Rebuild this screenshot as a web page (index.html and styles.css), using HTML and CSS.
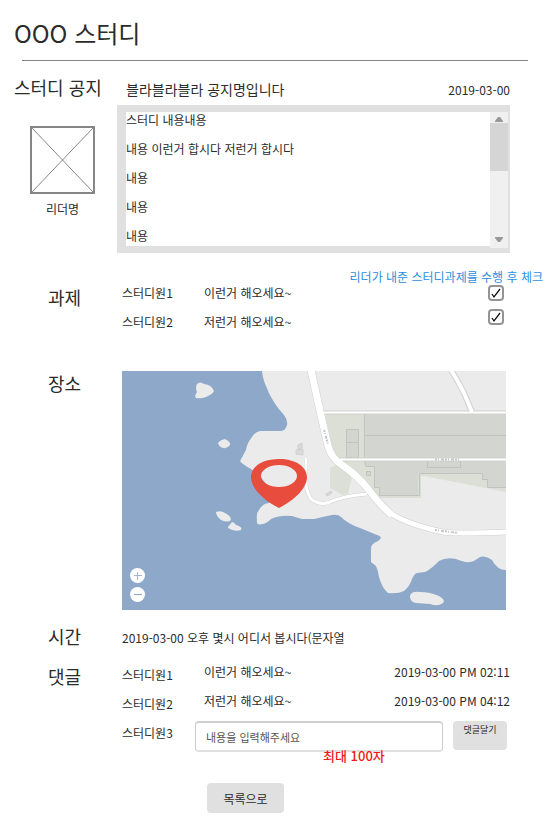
FILE: index.html
```html
<!DOCTYPE html>
<html lang="ko">
<head>
<meta charset="utf-8">
<meta name="viewport" content="width=device-width, initial-scale=1">
<title>OOO 스터디</title>
<link rel="stylesheet" href="styles.css">
</head>
<body>
<header class="page-header"><h1>OOO 스터디</h1></header>
<main>
  <section class="row row-notice">
    <div class="side">
      <h2>스터디 공지</h2>
      <figure class="leader">
        <svg class="avatar" viewBox="0 0 65 68" role="img" aria-label="리더 사진">
          <path d="M2 2 63 66M63 2 2 66" fill="none" stroke="#868686" stroke-width="1"/>
          <rect x="1" y="1" width="63" height="66" fill="none" stroke="#868686" stroke-width="2"/>
        </svg>
        <figcaption>리더명</figcaption>
      </figure>
    </div>
    <div class="notice">
      <div class="notice-head"><h3>블라블라블라 공지명입니다</h3><time>2019-03-00</time></div>
      <div class="notice-frame">
        <div class="notice-text">
          <p>스터디 내용내용</p>
          <p>내용 이런거 합시다 저런거 합시다</p>
          <p>내용</p>
          <p>내용</p>
          <p>내용</p>
        </div>
        <div class="scrollbar" aria-hidden="true">
          <svg class="arrow" viewBox="0 0 18 11"><path d="M5 10V9L8 5H10L13 9V10Z" fill="#999"/></svg>
          <div class="thumb"></div>
          <svg class="arrow arrow-down" viewBox="0 0 18 11"><path d="M5 0V1L8 5H10L13 1V0Z" fill="#999"/></svg>
        </div>
      </div>
    </div>
  </section>

  <section class="row row-tasks">
    <h2>과제</h2>
    <div class="tasks">
      <p class="hint">리더가 내준 스터디과제를 수행 후 체크</p>
      <ul class="task-list">
        <li><label class="name" for="t1">스터디원1</label><span>이런거 해오세요~</span></li>
        <li><label class="name" for="t2">스터디원2</label><span>저런거 해오세요~</span></li>
      </ul>
      <div class="checks">
        <input type="checkbox" id="t1" checked>
        <input type="checkbox" id="t2" checked>
      </div>
    </div>
  </section>

  <section class="row row-place">
    <h2>장소</h2>
    <div class="map">
      <svg viewBox="0 0 384 239" role="img" aria-label="지도">
        <rect width="384" height="239" fill="#8da8c9"/>
        <g fill="#ebebeb">
          <path d="M140 0 Q141 9 144 15 Q148 26 156 37 L162 44 Q168 52 163 58 Q162 60 156 60 L138 60 Q133 61 130 66 Q125 72 124 79 L118 90 Q120 93 129 98 L138 105 L144 113 L153 128 L147 132 Q141 132 137 139 Q134 142 135 149 Q134 155 140 153 Q144 153 149 148 Q158 144 170 145 L180 148 H192 Q200 146 210 144 Q216 143 219 146 Q226 153 238 157 L255 164 Q262 166 256 170 Q249 173 249 177 L249 191 L254 195 Q256 199 257 206 Q260 217 266 222 Q276 223 282 220 Q288 215 290 208 Q292 203 295 202 L303 201 Q308 199 317 190 Q324 186 334 188 Q345 193 352 190 L358 186 Q364 184 370 189 Q375 199 384 199 V0Z"/>
          <path d="M75 13Q78 10 82 13 Q90 14 92 20 Q91 23 84 26 Q79 28 74 27 Q72 25 75 21 Q73 17 75 13Z"/>
          <path d="M96 72Q98 69 103 68 Q109 71 108 74 Q105 78 101 77 Q97 76 96 72Z"/>
          <path d="M94 141Q99 139 103 142 Q109 145 109 149 Q106 152 99 149 Q94 145 94 141Z"/>
          <path d="M106 156L110 151Q112 151 114 154Q121 156 119 159Q112 161 106 157Z"/>
          <path d="M288 225Q289 220 298 221 Q308 221 317 225 Q324 229 321 232 Q316 236 308 233 L294 232 Q288 231 288 225Z"/>
        </g>
        <path d="M203 43H243V90L299 96H384V121L302 105H299V127H257L243 114L225 97L213 87Z M208 97L218 92L230 108Q227 117 226 123L221 124L208 117Z" fill="#dcdfd5"/>
        <path d="M242 43H384V116H365V108H360V102H296V124H258V116H253V96H244L242 90Z" fill="#d3d6d0"/>
        <g fill="none" stroke="#c1c4be" stroke-width="1">
          <path d="M242.500 43V90L244 95.500H252.500V116.500H257.500V124.500H297.500V102.500H360.500V108.500H365.500V116.500H384M242 64.500H384M305.500 89V96.500H338.500V89"/>
          <path d="M224.500 58.500H236.500V86.500H224.500ZM224 71.500H236M244.500 100.500H248.500V104.500H244.500Z" fill="#d3d6d0"/>
        </g>
        <g fill="none" stroke="#d0d0ce">
          <path d="M189 -1 198 40 206 75Q210 88 220 94Q235 104 246 118Q258 134 270 144" stroke-width="8"/>
          <path d="M265 140Q283 153 321 161Q333 163 385 161" stroke-width="6"/>
          <path d="M202 41.500H385M218 88.500H385M184 87V111Q184 120 189 128Q198 135 208 131Q221 125 245 123" stroke-width="4"/>
          <path d="M329 -1Q336 10 342 22L350 41" stroke-width="6"/>
        </g>
        <g fill="none" stroke="#fff">
          <path d="M189 -1 198 40 206 75Q210 88 220 94Q235 104 246 118Q258 134 270 144" stroke-width="7"/>
          <path d="M265 140Q283 153 321 161Q333 163 385 161" stroke-width="5"/>
          <path d="M202 41.500H385M218 88.500H385" stroke-width="2"/>
          <path d="M184 87V111Q184 120 189 128Q198 135 208 131Q221 125 245 123" stroke-width="3"/>
          <path d="M329 -1Q336 10 342 22L350 41" stroke-width="4"/>
        </g>
        <path d="M202 59 206 73M313 88.500H338M313 159 336 162" fill="none" stroke="#c6c6c6" stroke-width="2" stroke-dasharray="2 1 1 2 3 1"/>
        <path d="M174 79 181 78V84L174 83ZM176 74 180 72V77L176 78ZM204 123 209 120 210 122 205 125Z" fill="#dadada" stroke="#cfcfcf"/>
        <path d="M157 88C174 88 185 96 185 106C185 117 173 129 157 137C141 129 129 117 129 106C129 96 140 88 157 88ZM157 94A18 11 0 1 0 157 116A18 11 0 1 0 157 94Z" fill="#e84c3d" fill-rule="evenodd"/>
      </svg>
      <div class="zoom">
        <button type="button" aria-label="확대"><svg viewBox="0 0 15 15"><path d="M4 7.500H12M7.500 4V12" stroke="#a5b5d2"/></svg></button>
        <button type="button" aria-label="축소"><svg viewBox="0 0 15 15"><path d="M4 7.500H12" stroke="#8da8c9"/></svg></button>
      </div>
    </div>
  </section>

  <section class="row row-time">
    <h2>시간</h2>
    <p>2019-03-00 오후 몇시 어디서 봅시다(문자열</p>
  </section>

  <section class="row row-comments">
    <h2>댓글</h2>
    <div class="comments">
      <div class="comment"><span class="name">스터디원1</span><p>이런거 해오세요~</p><time>2019-03-00 PM 02:11</time></div>
      <div class="comment"><span class="name">스터디원2</span><p>저런거 해오세요~</p><time>2019-03-00 PM 04:12</time></div>
      <form class="comment">
        <label class="name" for="reply">스터디원3</label>
        <div class="field">
          <input type="text" id="reply" placeholder="내용을 입력해주세요">
          <span class="limit">최대 100자</span>
        </div>
        <button type="button" class="btn btn-reply">댓글달기</button>
      </form>
    </div>
  </section>
  <button type="button" class="btn btn-list">목록으로</button>
</main>
</body>
</html>
```
FILE: styles.css
```css
* { box-sizing: border-box; }

body, h1, h2, h3, p, ul, figure { margin: 0; padding: 0; }

body {
  background: #fff;
  color: #2b2b2b;
  font: 12px/29px "Noto Sans CJK KR", sans-serif;
}

button, input { font-family: inherit; color: inherit; }
ul { list-style: none; }
svg { display: block; }

.page-header {
  margin: 0 22px;
  padding-top: 15px;
  height: 61px;
  border-bottom: 1px solid #868686;
}

h1 { margin-left: -8px; font-size: 24px; line-height: 36px; font-weight: 400; }
h2 { font-size: 18px; line-height: 28px; font-weight: 400; }
h3 { font-size: 14px; font-weight: 400; }

main { padding-right: 40px; }

.row { display: grid; grid-template-columns: 74px minmax(0, 1fr); padding-left: 48px; }

/* Notice */
.row-notice { grid-template-columns: 103px minmax(0, 1fr); padding: 12px 0 0 14px; }
.leader { width: 65px; margin: 25px 0 0 16px; text-align: center; }
.avatar { width: 65px; height: 68px; }
.notice-head { display: flex; justify-content: space-between; padding: 0 0 1px 9px; margin-top: 2px; }
.notice-frame {
  display: flex;
  padding: 7px 2px 5px 9px;
  height: 148px;
  background: #e0e0e0;
}
.notice-text { flex: 1; margin-bottom: 2px; overflow: hidden; background: #fff; }
.notice-text p:first-child { margin-top: -7px; }
.scrollbar { display: flex; flex-direction: column; width: 18px; background: #f0f0f0; }
.arrow { width: 18px; height: 11px; }
.thumb { height: 48px; background: #d5d5d5; }
.arrow-down { margin-top: auto; }

/* Tasks */
.row-tasks { padding-top: 25px; }
.row-tasks h2 { padding-top: 5px; }
.tasks { position: relative; display: flex; justify-content: space-between; }
.hint {
  position: absolute;
  top: -9px;
  right: -33px;
  line-height: 16px;
  color: #2d8fdc;
  white-space: nowrap;
}
.task-list li { display: flex; }
.name { flex: none; width: 82px; }
.checks { display: flex; flex-direction: column; gap: 8px; padding: 7px 6px 0 0; }
.checks input {
  appearance: none;
  width: 16px;
  height: 16px;
  margin: 0;
  border: 2px solid #949494;
  border-radius: 4px;
  background: #fff;
}
.checks input:checked {
  background: #fff url("data:image/svg+xml,%3Csvg xmlns='http://www.w3.org/2000/svg' viewBox='0 0 12 12'%3E%3Cpath d='M2 7L4 10L10 2' fill='none' stroke='%23111' stroke-width='1.300'/%3E%3C/svg%3E") center / 12px 12px no-repeat;
}

/* Place */
.row-place { padding-top: 34px; }
.row-place h2 { margin-top: -1px; }
.map { position: relative; margin: 1px 4px 0 0; }
.map > svg { width: 100%; }
.zoom { position: absolute; left: 8px; bottom: 8px; display: grid; gap: 4px; }
.zoom button { width: 15px; height: 15px; padding: 0; border: 0; border-radius: 50%; background: #fff; }

/* Time */
.row-time { padding-top: 13px; }
.row-time h2 { margin-top: -1px; }

/* Comments */
.row-comments { padding-top: 5px; }
.row-comments h2 { padding-top: 5px; }
.comment { display: flex; height: 29px; }
.comment .name { padding-top: 3px; }
.comment time { margin-left: auto; }
form.comment .name { width: 73px; }
.field { position: relative; flex: 1; margin: 6px 10px 0 0; }
.field input {
  display: block;
  width: 100%;
  height: 31px;
  padding: 0 10px;
  border: 1px solid #ccc;
  border-width: 2px 1px;
  border-color: #d0d0d0 #ccc #e0e0e0;
  border-radius: 4px;
  font-size: 11px;
}
.field input::placeholder { color: #555; opacity: 1; }
.limit {
  position: absolute;
  top: 27px;
  left: 128px;
  font-size: 13px;
  line-height: 16px;
  font-weight: 500;
  color: #f01818;
}
.btn { border: 0; border-radius: 4px; background: #e0e0e0; }
.btn-reply { width: 54px; height: 29px; margin: 6px 3px 0 0; padding: 0 0 12px; font-size: 9px; line-height: 16px; }
.btn-list { display: block; width: 77px; height: 30px; margin: 39px 0 0 207px; padding: 0; font-size: 12px; }
```
